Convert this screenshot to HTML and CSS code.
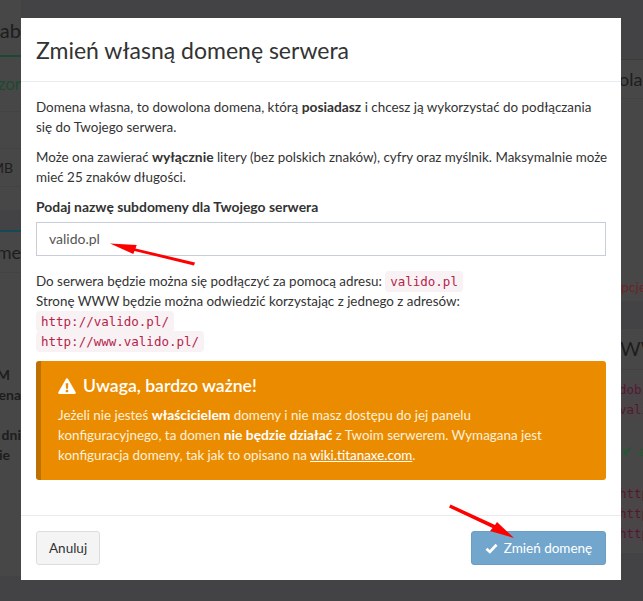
FILE: index.html
```html
<!DOCTYPE html>
<html>
  <head>
    <meta charset="utf-8" />
    <title>Zmień własną domenę serwera</title>
    <link rel="stylesheet" href="styles.css">
  </head>
  <body>
    <!-- strona pod modalem, widoczna tylko po bokach -->
    <div class="page">
      <div class="side side-left">
        <div class="card card-top">
          <div class="card-title">zab</div>
          <div class="green-row">zor</div>
          <div class="row"></div>
          <div class="row row-mb">MB</div>
          <div class="row row-short"></div>
        </div>
        <div class="card card-name">
          <div class="name-row">me</div>
          <div class="bold-rows">
            <div class="bold-short">M</div>
            <div>ena</div>
            <div class="bold-next">dni</div>
            <div class="bold-short">ie</div>
          </div>
        </div>
      </div>
      <div class="side side-right">
        <div class="card card-console">
          <div class="head-row">ola</div>
          <div class="option-link">pcje</div>
        </div>
        <div class="card card-www">
          <div class="head-row head-www">WWW</div>
          <div class="code-line code-first">dobr</div>
          <div class="code-line">vali</div>
          <div class="ok-line"><span class="ok-mark">✔</span>al</div>
          <div class="code-line code-gap">http</div>
          <div class="code-line">http</div>
          <div class="code-line">http</div>
        </div>
      </div>
    </div>

    <div class="modal">
      <div class="modal-header">
        <h4 class="modal-title">Zmień własną domenę serwera</h4>
      </div>
      <div class="modal-body">
        <p>Domena własna, to dowolona domena, którą <b>posiadasz</b> i chcesz ją wykorzystać do podłączania się do Twojego serwera.</p>
        <p class="nowrap">Może ona zawierać <b>wyłącznie</b> litery (bez polskich znaków), cyfry oraz myślnik. Maksymalnie może<br />mieć 25 znaków długości.</p>
        <label class="field-label">Podaj nazwę subdomeny dla Twojego serwera</label>
        <div class="input">valido.pl</div>
        <div class="addresses">
          Do serwera będzie można się podłączyć za pomocą adresu: <code>valido.pl</code><br />
          Stronę WWW będzie można odwiedzić korzystając z jednego z adresów:<br />
          <code>http://valido.pl/</code><br />
          <code>http://www.valido.pl/</code>
        </div>
        <div class="callout">
          <h4>
            <svg class="warn-icon" viewBox="0 0 18 16"><path fill="#fff" fill-rule="evenodd" d="M9 .3c.5 0 .9.3 1.100.7l7.600 13.200c.5.800-.1 1.800-1.100 1.800H1.400c-1 0-1.600-1-1.100-1.800L7.900 1C8.100.6 8.500.3 9 .3zM7.700 5.200l.3 5.600h2l.3-5.600zM9 11.700a1.400 1.400 0 1 0 0 2.800 1.400 1.400 0 0 0 0-2.800z"/></svg>
            Uwaga, bardzo ważne!
          </h4>
          <p>Jeżeli nie jesteś <b>właścicielem</b> domeny i nie masz dostępu do jej panelu konfiguracyjnego, ta domen <b>nie będzie działać</b> z Twoim serwerem. Wymagana jest konfiguracja domeny, tak jak to opisano na <a href="#">wiki.titanaxe.com</a>.</p>
        </div>
      </div>
      <div class="modal-footer">
        <button class="btn">Anuluj</button>
        <button class="btn btn-primary">
          <svg class="check-icon" viewBox="0 0 14 12"><path fill="none" stroke="#fff" stroke-width="3" d="M1.500 6.200l3.700 3.500 7.300-7.800"/></svg>
          Zmień domenę
        </button>
      </div>
    </div>

    <!-- czerwone strzałki dorysowane na zrzucie -->
    <svg class="arrows" viewBox="0 0 643 601">
      <path fill="#f00" d="M110 243.500L136.700 245l-1.200 3.500 59.500 14-1 3-59.500-14.500-1.200 3z"/>
      <path fill="#f00" d="M450.500 504.500L495 525l2-3 17 16-24-7 2.500-3-43.500-20.500z"/>
    </svg>
  </body>
</html>
```

FILE: styles.css
```css
html,
body {
  margin: 0;
  padding: 0;
  height: 100%;
}
body {
  position: relative;
  width: 643px;
  height: 601px;
  overflow: hidden;
  background: #434345;
  font-family: "Lato", "Noto Sans", sans-serif;
  font-size: 14px;
  color: #333;
}
.page {
  display: flex;
  justify-content: space-between;
  color: #1d1d1d;
}
.side {
  overflow: hidden;
  white-space: nowrap;
}
.side-left {
  width: 21px;
  direction: rtl;
  text-align: right;
}
.side-right {
  width: 24px;
  padding-top: 59px;
}
.card {
  background: #474747;
}

/* lewa kolumna */
.card-top {
  height: 198px;
  padding-top: 12px;
}
.card-title {
  box-sizing: border-box;
  height: 45px;
  padding-top: 2px;
  font-size: 20px;
  line-height: 32px;
  border-bottom: 2px solid #1c4a30;
}
.green-row {
  height: 54px;
  line-height: 54px;
  font-size: 17px;
  color: #1c4a30;
  border-bottom: 1px solid #424242;
}
.row {
  height: 36px;
  border-bottom: 1px solid #424242;
}
.row-mb {
  height: 37px;
  line-height: 38px;
  font-size: 14px;
  padding-right: 8px;
}
.row-short {
  height: 21px;
  border: 0;
}
.card-name {
  height: 344px;
  margin-top: 20px;
  border-top: 2px solid #134a56;
}
.name-row {
  height: 40px;
  line-height: 40px;
  font-size: 18px;
  border-bottom: 1px solid #424242;
}
.bold-rows {
  padding-top: 92px;
  font-weight: bold;
  line-height: 20px;
}
.bold-short {
  padding-right: 11px;
}
.bold-next {
  margin-top: 20px;
}

/* prawa kolumna */
.card-console {
  height: 241px;
  border-top: 1px solid #3d3d3d;
}
.head-row {
  height: 38px;
  line-height: 38px;
  font-size: 18px;
  border-bottom: 1px solid #424242;
}
.option-link {
  margin-top: 178px;
  padding-left: 2px;
  line-height: 20px;
  color: #6b2525;
}
.card-www {
  margin-top: 28px;
  height: 224px;
}
.head-www {
  height: 40px;
  line-height: 38px;
  font-size: 20px;
  padding-left: 1px;
}
.code-line {
  height: 20px;
  font-family: "DejaVu Sans Mono", monospace;
  font-size: 12.500px;
  line-height: 20px;
  color: #521a30;
  background: #4a4547;
}
.code-first {
  margin-top: 10px;
}
.code-gap {
  margin-top: 23px;
}
.ok-line {
  margin-top: 21px;
  line-height: 20px;
  color: #1c5a34;
}
.ok-mark {
  margin: 0 5px 0 2px;
}

/* modal */
.modal {
  position: absolute;
  left: 21px;
  top: 18px;
  display: flex;
  flex-direction: column;
  width: 600px;
  height: 562px;
  background: #fff;
}
.modal-header {
  height: 63px;
  padding: 0 15px;
  border-bottom: 1px solid #e9ecef;
}
.modal-title {
  margin: 0;
  font-size: 23px;
  font-weight: 400;
  line-height: 64px;
  color: #333;
}
.modal-body {
  flex: 1;
  padding: 15px 15px 0;
  font-size: 13.400px;
  line-height: 20px;
}
.modal-body p {
  margin: 0 0 10px;
}
.modal-body .nowrap {
  white-space: nowrap;
}
.modal-body b {
  font-size: 13.800px;
}
.field-label {
  display: block;
  margin: 0 0 5px;
  font-size: 13.900px;
  font-weight: bold;
}
.input {
  height: 32px;
  padding: 0 12px;
  line-height: 32px;
  font-size: 14px;
  color: #555;
  border: 1px solid #c8ced9;
}
.addresses {
  margin-top: 15px;
}
code {
  padding: 3px 5px;
  font-family: "DejaVu Sans Mono", monospace;
  font-size: 12.500px;
  line-height: 1;
  color: #b5234b;
  background: #f9f2f4;
  border-radius: 4px;
}
.callout {
  box-sizing: border-box;
  margin-top: 10px;
  height: 119px;
  padding: 0 35px 0 17px;
  background: #eb8c00;
  border-left: 5px solid #bd7100;
  border-radius: 3px;
  color: #fff;
}
.callout h4 {
  display: flex;
  align-items: center;
  gap: 7px;
  margin: 0;
  padding: 10px 0 4px;
  height: 30px;
  font-size: 17.600px;
  font-weight: 600;
  line-height: 24px;
}
.warn-icon {
  width: 18px;
  height: 16px;
}
.callout p {
  margin: 0;
  color: #fdf0dc;
}
.callout b {
  color: #fff;
}
.callout a {
  color: #fff;
  text-decoration: underline;
}
.modal-footer {
  display: flex;
  justify-content: space-between;
  padding: 15px;
  height: 34px;
  border-top: 1px solid #e9ecef;
}
.btn {
  height: 34px;
  padding: 0 12px;
  font-family: inherit;
  font-size: 13.500px;
  color: #333;
  background: #f4f4f4;
  border: 1px solid #ddd;
  border-radius: 3px;
}
.btn-primary {
  display: flex;
  align-items: center;
  justify-content: center;
  gap: 6px;
  width: 135px;
  color: #fff;
  background: #72a6cd;
  border-color: #6a9ec5;
}
.check-icon {
  width: 13px;
  height: 11px;
}
.arrows {
  position: absolute;
  left: 0;
  top: 0;
  width: 643px;
  height: 601px;
  pointer-events: none;
}
```
